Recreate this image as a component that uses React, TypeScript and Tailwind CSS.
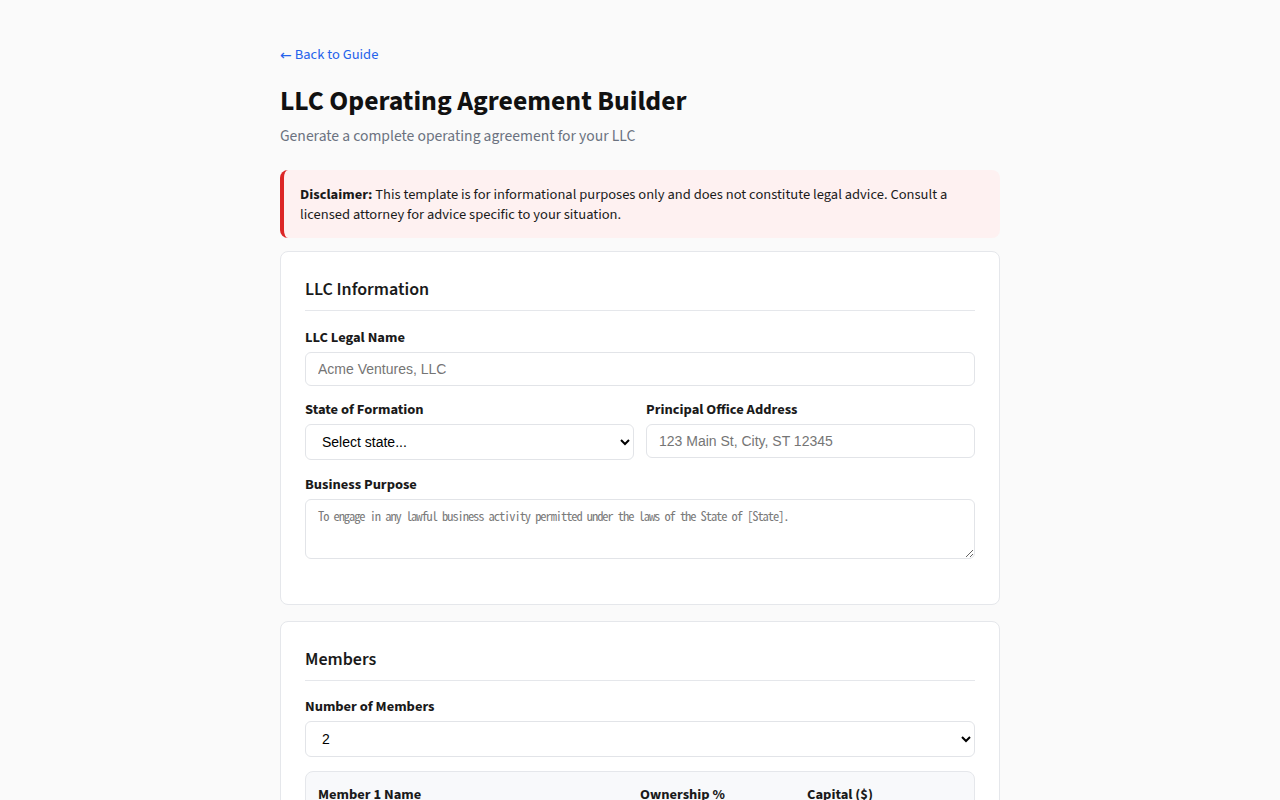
import React from "react";

const sans = "font-['Source_Sans_3','Source_Sans_Pro',Lato,sans-serif]";
const field =
    "block w-full rounded-md border border-[#e2e4e8] bg-white px-3 font-['Liberation_Sans',Arial,sans-serif] text-[14px] text-black placeholder:text-[#757575] outline-none";

function Label({ children }: { children: React.ReactNode }) {
    return <label className="mb-[3px] block text-[14.5px] leading-[22px] font-bold text-[#1a1a1a]">{children}</label>;
}

function SectionTitle({ children, tight }: { children: React.ReactNode; tight?: boolean }) {
    return (
        <h2
            className={
                "border-b border-[#e5e7eb] pt-px pb-[7px] text-[18px] leading-[26px] font-semibold text-[#1a1a1a] " +
                (tight ? "mb-[15px]" : "mb-4")
            }
        >
            {children}
        </h2>
    );
}

const states = ["Alabama", "Alaska", "Arizona", "California", "Delaware", "Florida", "New York", "Texas", "Wyoming"];

const MemberRow = ({ n }: { n: number }) => (
    <div className="mb-3 rounded-lg border border-[#e5e7eb] bg-[#f8f9fb] p-3">
        <div className="grid grid-cols-[2fr_1fr_1fr] gap-3">
            <div>
                <Label>Member {n} Name</Label>
                <input className={field + " h-[34px]"} placeholder="Full legal name" />
            </div>
            <div>
                <Label>Ownership %</Label>
                <input className={field + " h-[34px]"} placeholder="50" />
            </div>
            <div>
                <Label>Capital ($)</Label>
                <input className={field + " h-[34px]"} placeholder="10000" />
            </div>
        </div>
    </div>
);

export default function App() {
    return (
        <div className={"min-h-screen bg-[#fafafa] text-[#1a1a1a] " + sans}>
            <div className="mx-auto w-[720px] pt-[45px] pb-16">
                <a href="#" className="flex h-5 items-center text-[14.5px] leading-[20px] text-[#2563eb]">
                    <span className="mr-[3px] font-['DejaVu_Sans'] text-[14px] leading-[20px]">←</span>Back to Guide
                </a>
                <h1 className="mt-5 text-[27.7px] leading-[34px] font-bold text-[#111]">LLC Operating Agreement Builder</h1>
                <p className="mt-[5px] text-[15.6px] leading-[24px] text-[#6b7280]">
                    Generate a complete operating agreement for your LLC
                </p>

                <div className="mt-[22px] rounded-lg border-l-4 border-[#dc2626] bg-[#fef1f1] pt-[15px] pr-6 pb-[13px] pl-4 text-[14.5px] leading-[20px] text-[#1a1a1a]">
                    <strong className="font-bold">Disclaimer:</strong> This template is for informational purposes only
                    and does not constitute legal advice. Consult a licensed attorney for advice specific to your
                    situation.
                </div>

                <section className="mt-[13px] rounded-lg border border-[#e5e7eb] bg-white px-6 pt-6 pb-[24px]">
                    <SectionTitle>LLC Information</SectionTitle>
                    <div className="mb-[13px]">
                        <Label>LLC Legal Name</Label>
                        <input className={field + " h-[34px]"} placeholder="Acme Ventures, LLC" />
                    </div>
                    <div className="mb-[14px] grid grid-cols-2 gap-3">
                        <div>
                            <Label>State of Formation</Label>
                            <select className={field + " h-9"} defaultValue="">
                                <option value="">Select state...</option>
                                {states.map((s) => (
                                    <option key={s}>{s}</option>
                                ))}
                            </select>
                        </div>
                        <div>
                            <Label>Principal Office Address</Label>
                            <input className={field + " h-[34px]"} placeholder="123 Main St, City, ST 12345" />
                        </div>
                    </div>
                    <div className="mb-[21px]">
                        <Label>Business Purpose</Label>
                        <textarea
                            className="block h-[60px] w-full rounded-md border border-[#e2e4e8] bg-white px-3 pt-[7px] pb-2 font-['Noto_Sans_Mono_CJK_KR'] text-[12.5px] leading-[17px] font-light tracking-[-1.08px] text-black placeholder:text-[#7a7a7a] outline-none"
                            placeholder="To engage in any lawful business activity permitted under the laws of the State of [State]."
                        />
                    </div>
                </section>

                <section className="mt-4 rounded-lg border border-[#e5e7eb] bg-white px-6 pt-6 pb-6">
                    <SectionTitle tight>Members</SectionTitle>
                    <div className="mb-[14px]">
                        <Label>Number of Members</Label>
                        <select className={field + " h-9"} defaultValue="2">
                            {[1, 2, 3, 4, 5, 6].map((n) => (
                                <option key={n}>{n}</option>
                            ))}
                        </select>
                    </div>
                    <MemberRow n={1} />
                    <MemberRow n={2} />
                </section>
            </div>
        </div>
    );
}
